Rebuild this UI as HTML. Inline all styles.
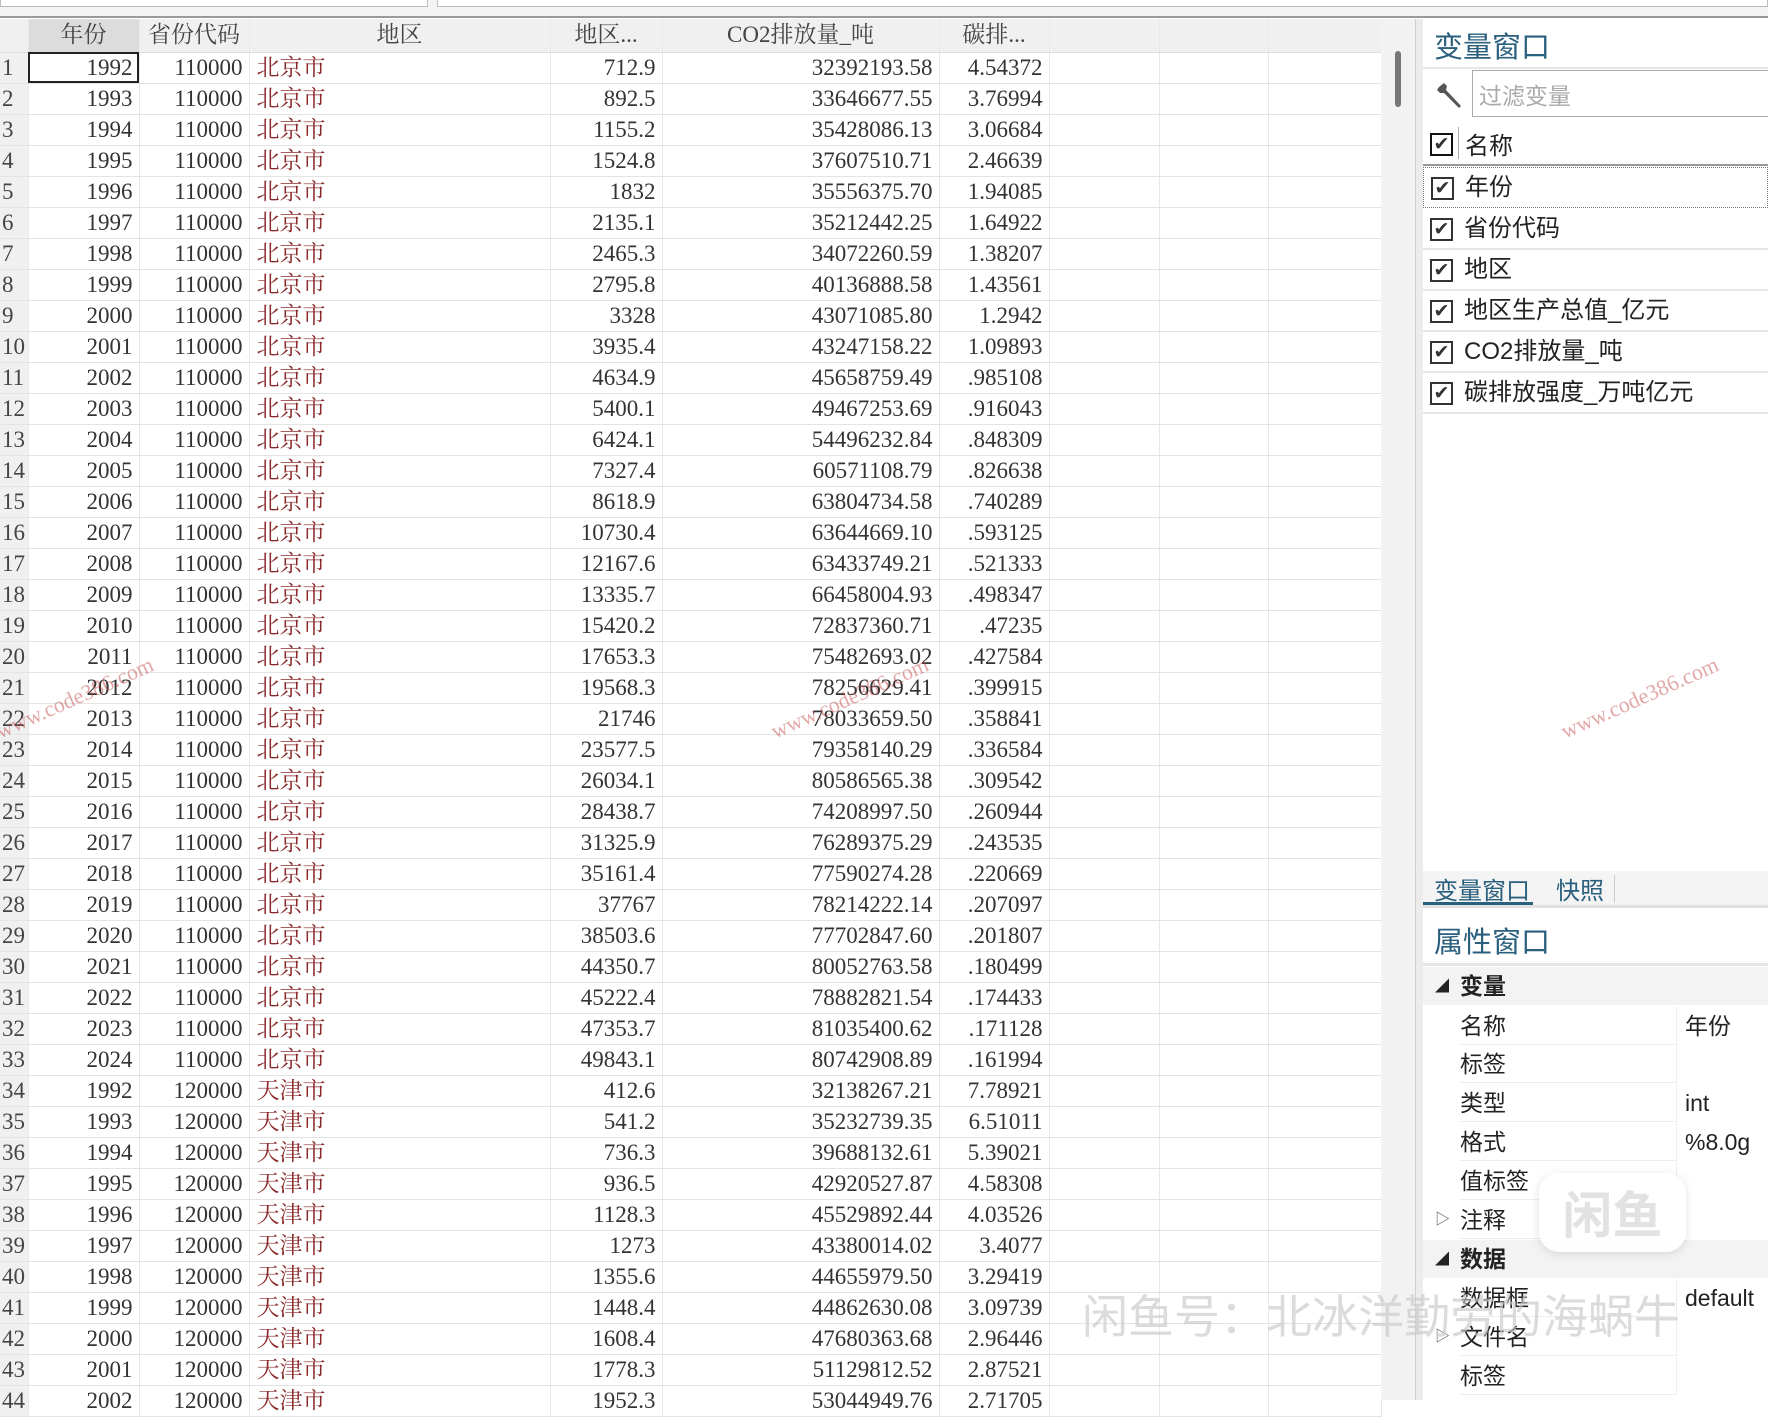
<!DOCTYPE html>
<html><head><meta charset="utf-8"><style>
*{box-sizing:border-box;margin:0;padding:0}
body{width:1768px;height:1400px;overflow:hidden;background:#fff;position:relative;font-family:"Liberation Serif","Noto Serif CJK SC",serif}
.top{position:absolute;left:0;top:0;width:1768px;height:18px;background:#f3f3f3;border-bottom:2px solid #9a9a9a}
.tb1{position:absolute;left:0;top:0;width:428px;height:7px;background:#fff;border:1px solid #bbb;border-top:none}
.tb2{position:absolute;left:437px;top:0;width:1331px;height:7px;background:#fff;border:1px solid #bbb;border-top:none}
table{position:absolute;left:0;top:19px;border-collapse:collapse;table-layout:fixed;font-size:23px;color:#333}
td,th{height:31px;border-bottom:1px solid #e4e4e4;border-right:1px solid #e8e8e8;white-space:nowrap;overflow:hidden;padding:0 6px;font-weight:normal;line-height:30px}
th{height:33px;background:#f0f0f0;color:#444;text-align:center;border-bottom:1px solid #ddd}
th.sel{background:#dcdcdc}
td.n{background:#f0f0f0;text-align:left;padding:0 0 0 2px;color:#444;overflow:hidden}
td.r{text-align:right}
td.c{color:#8a2a2a;padding-left:7px}
td.cur{outline:2px solid #222;outline-offset:-2px}
.gray{position:absolute;left:1381px;top:19px;width:34px;height:1381px;background:#f2f2f2}
.sb{position:absolute;left:1395px;top:51px;width:6px;height:56px;background:#777;border-radius:3px}
.sep{position:absolute;left:1415px;top:19px;width:8px;height:1381px;background:#ececec;border-left:1px solid #cfcfcf}
.panel{position:absolute;left:1423px;top:19px;width:345px;height:1381px;background:#fff;font-family:"Liberation Sans","Noto Sans CJK SC",sans-serif;color:#222}
.ttl{position:absolute;left:11px;font-size:29px;color:#2a5f7e}
.filter{position:absolute;left:49px;top:51px;width:300px;height:47px;border:1px solid #aaa;font-size:23px;color:#aaa;padding:6px 6px}
.vr{position:absolute;left:0;width:345px;height:41px;border-bottom:2px solid #e6e6e6;font-size:24px;line-height:40px}
.cb{position:absolute;left:7px;top:9px;width:23px;height:23px;border:2px solid #333;font-size:19px;line-height:19px;text-align:center;font-weight:bold;color:#333;font-family:"DejaVu Sans",sans-serif}
.vr span{position:absolute;left:41px}
.pr{position:absolute;left:0;width:345px;height:38px;font-size:23px;line-height:38px}
.pr .l{position:absolute;left:37px;width:217px;height:38px;border-bottom:1px solid #eee;border-right:1px solid #eee;padding-left:0}
.pr .v{position:absolute;left:262px}
.grp{background:#f3f3f3;font-weight:bold}
.wm{position:absolute;color:rgba(190,60,60,.45);font-size:22px;transform:rotate(-24deg);font-family:"Liberation Serif",serif;white-space:nowrap}
</style></head><body>
<div class="top"><div class="tb1"></div><div class="tb2"></div></div>
<table>
<colgroup><col style="width:28px"><col style="width:111px"><col style="width:110px"><col style="width:301px"><col style="width:112px"><col style="width:277px"><col style="width:110px"><col style="width:110px"><col style="width:109px"><col style="width:113px"></colgroup>
<tr><th></th><th class="sel">年份</th><th>省份代码</th><th>地区</th><th>地区...</th><th>CO2排放量_吨</th><th>碳排...</th><th></th><th></th><th></th></tr>
<tr><td class="n">1</td><td class="r cur">1992</td><td class="r">110000</td><td class="c">北京市</td><td class="r">712.9</td><td class="r">32392193.58</td><td class="r">4.54372</td><td></td><td></td><td></td></tr>
<tr><td class="n">2</td><td class="r">1993</td><td class="r">110000</td><td class="c">北京市</td><td class="r">892.5</td><td class="r">33646677.55</td><td class="r">3.76994</td><td></td><td></td><td></td></tr>
<tr><td class="n">3</td><td class="r">1994</td><td class="r">110000</td><td class="c">北京市</td><td class="r">1155.2</td><td class="r">35428086.13</td><td class="r">3.06684</td><td></td><td></td><td></td></tr>
<tr><td class="n">4</td><td class="r">1995</td><td class="r">110000</td><td class="c">北京市</td><td class="r">1524.8</td><td class="r">37607510.71</td><td class="r">2.46639</td><td></td><td></td><td></td></tr>
<tr><td class="n">5</td><td class="r">1996</td><td class="r">110000</td><td class="c">北京市</td><td class="r">1832</td><td class="r">35556375.70</td><td class="r">1.94085</td><td></td><td></td><td></td></tr>
<tr><td class="n">6</td><td class="r">1997</td><td class="r">110000</td><td class="c">北京市</td><td class="r">2135.1</td><td class="r">35212442.25</td><td class="r">1.64922</td><td></td><td></td><td></td></tr>
<tr><td class="n">7</td><td class="r">1998</td><td class="r">110000</td><td class="c">北京市</td><td class="r">2465.3</td><td class="r">34072260.59</td><td class="r">1.38207</td><td></td><td></td><td></td></tr>
<tr><td class="n">8</td><td class="r">1999</td><td class="r">110000</td><td class="c">北京市</td><td class="r">2795.8</td><td class="r">40136888.58</td><td class="r">1.43561</td><td></td><td></td><td></td></tr>
<tr><td class="n">9</td><td class="r">2000</td><td class="r">110000</td><td class="c">北京市</td><td class="r">3328</td><td class="r">43071085.80</td><td class="r">1.2942</td><td></td><td></td><td></td></tr>
<tr><td class="n">10</td><td class="r">2001</td><td class="r">110000</td><td class="c">北京市</td><td class="r">3935.4</td><td class="r">43247158.22</td><td class="r">1.09893</td><td></td><td></td><td></td></tr>
<tr><td class="n">11</td><td class="r">2002</td><td class="r">110000</td><td class="c">北京市</td><td class="r">4634.9</td><td class="r">45658759.49</td><td class="r">.985108</td><td></td><td></td><td></td></tr>
<tr><td class="n">12</td><td class="r">2003</td><td class="r">110000</td><td class="c">北京市</td><td class="r">5400.1</td><td class="r">49467253.69</td><td class="r">.916043</td><td></td><td></td><td></td></tr>
<tr><td class="n">13</td><td class="r">2004</td><td class="r">110000</td><td class="c">北京市</td><td class="r">6424.1</td><td class="r">54496232.84</td><td class="r">.848309</td><td></td><td></td><td></td></tr>
<tr><td class="n">14</td><td class="r">2005</td><td class="r">110000</td><td class="c">北京市</td><td class="r">7327.4</td><td class="r">60571108.79</td><td class="r">.826638</td><td></td><td></td><td></td></tr>
<tr><td class="n">15</td><td class="r">2006</td><td class="r">110000</td><td class="c">北京市</td><td class="r">8618.9</td><td class="r">63804734.58</td><td class="r">.740289</td><td></td><td></td><td></td></tr>
<tr><td class="n">16</td><td class="r">2007</td><td class="r">110000</td><td class="c">北京市</td><td class="r">10730.4</td><td class="r">63644669.10</td><td class="r">.593125</td><td></td><td></td><td></td></tr>
<tr><td class="n">17</td><td class="r">2008</td><td class="r">110000</td><td class="c">北京市</td><td class="r">12167.6</td><td class="r">63433749.21</td><td class="r">.521333</td><td></td><td></td><td></td></tr>
<tr><td class="n">18</td><td class="r">2009</td><td class="r">110000</td><td class="c">北京市</td><td class="r">13335.7</td><td class="r">66458004.93</td><td class="r">.498347</td><td></td><td></td><td></td></tr>
<tr><td class="n">19</td><td class="r">2010</td><td class="r">110000</td><td class="c">北京市</td><td class="r">15420.2</td><td class="r">72837360.71</td><td class="r">.47235</td><td></td><td></td><td></td></tr>
<tr><td class="n">20</td><td class="r">2011</td><td class="r">110000</td><td class="c">北京市</td><td class="r">17653.3</td><td class="r">75482693.02</td><td class="r">.427584</td><td></td><td></td><td></td></tr>
<tr><td class="n">21</td><td class="r">2012</td><td class="r">110000</td><td class="c">北京市</td><td class="r">19568.3</td><td class="r">78256629.41</td><td class="r">.399915</td><td></td><td></td><td></td></tr>
<tr><td class="n">22</td><td class="r">2013</td><td class="r">110000</td><td class="c">北京市</td><td class="r">21746</td><td class="r">78033659.50</td><td class="r">.358841</td><td></td><td></td><td></td></tr>
<tr><td class="n">23</td><td class="r">2014</td><td class="r">110000</td><td class="c">北京市</td><td class="r">23577.5</td><td class="r">79358140.29</td><td class="r">.336584</td><td></td><td></td><td></td></tr>
<tr><td class="n">24</td><td class="r">2015</td><td class="r">110000</td><td class="c">北京市</td><td class="r">26034.1</td><td class="r">80586565.38</td><td class="r">.309542</td><td></td><td></td><td></td></tr>
<tr><td class="n">25</td><td class="r">2016</td><td class="r">110000</td><td class="c">北京市</td><td class="r">28438.7</td><td class="r">74208997.50</td><td class="r">.260944</td><td></td><td></td><td></td></tr>
<tr><td class="n">26</td><td class="r">2017</td><td class="r">110000</td><td class="c">北京市</td><td class="r">31325.9</td><td class="r">76289375.29</td><td class="r">.243535</td><td></td><td></td><td></td></tr>
<tr><td class="n">27</td><td class="r">2018</td><td class="r">110000</td><td class="c">北京市</td><td class="r">35161.4</td><td class="r">77590274.28</td><td class="r">.220669</td><td></td><td></td><td></td></tr>
<tr><td class="n">28</td><td class="r">2019</td><td class="r">110000</td><td class="c">北京市</td><td class="r">37767</td><td class="r">78214222.14</td><td class="r">.207097</td><td></td><td></td><td></td></tr>
<tr><td class="n">29</td><td class="r">2020</td><td class="r">110000</td><td class="c">北京市</td><td class="r">38503.6</td><td class="r">77702847.60</td><td class="r">.201807</td><td></td><td></td><td></td></tr>
<tr><td class="n">30</td><td class="r">2021</td><td class="r">110000</td><td class="c">北京市</td><td class="r">44350.7</td><td class="r">80052763.58</td><td class="r">.180499</td><td></td><td></td><td></td></tr>
<tr><td class="n">31</td><td class="r">2022</td><td class="r">110000</td><td class="c">北京市</td><td class="r">45222.4</td><td class="r">78882821.54</td><td class="r">.174433</td><td></td><td></td><td></td></tr>
<tr><td class="n">32</td><td class="r">2023</td><td class="r">110000</td><td class="c">北京市</td><td class="r">47353.7</td><td class="r">81035400.62</td><td class="r">.171128</td><td></td><td></td><td></td></tr>
<tr><td class="n">33</td><td class="r">2024</td><td class="r">110000</td><td class="c">北京市</td><td class="r">49843.1</td><td class="r">80742908.89</td><td class="r">.161994</td><td></td><td></td><td></td></tr>
<tr><td class="n">34</td><td class="r">1992</td><td class="r">120000</td><td class="c">天津市</td><td class="r">412.6</td><td class="r">32138267.21</td><td class="r">7.78921</td><td></td><td></td><td></td></tr>
<tr><td class="n">35</td><td class="r">1993</td><td class="r">120000</td><td class="c">天津市</td><td class="r">541.2</td><td class="r">35232739.35</td><td class="r">6.51011</td><td></td><td></td><td></td></tr>
<tr><td class="n">36</td><td class="r">1994</td><td class="r">120000</td><td class="c">天津市</td><td class="r">736.3</td><td class="r">39688132.61</td><td class="r">5.39021</td><td></td><td></td><td></td></tr>
<tr><td class="n">37</td><td class="r">1995</td><td class="r">120000</td><td class="c">天津市</td><td class="r">936.5</td><td class="r">42920527.87</td><td class="r">4.58308</td><td></td><td></td><td></td></tr>
<tr><td class="n">38</td><td class="r">1996</td><td class="r">120000</td><td class="c">天津市</td><td class="r">1128.3</td><td class="r">45529892.44</td><td class="r">4.03526</td><td></td><td></td><td></td></tr>
<tr><td class="n">39</td><td class="r">1997</td><td class="r">120000</td><td class="c">天津市</td><td class="r">1273</td><td class="r">43380014.02</td><td class="r">3.4077</td><td></td><td></td><td></td></tr>
<tr><td class="n">40</td><td class="r">1998</td><td class="r">120000</td><td class="c">天津市</td><td class="r">1355.6</td><td class="r">44655979.50</td><td class="r">3.29419</td><td></td><td></td><td></td></tr>
<tr><td class="n">41</td><td class="r">1999</td><td class="r">120000</td><td class="c">天津市</td><td class="r">1448.4</td><td class="r">44862630.08</td><td class="r">3.09739</td><td></td><td></td><td></td></tr>
<tr><td class="n">42</td><td class="r">2000</td><td class="r">120000</td><td class="c">天津市</td><td class="r">1608.4</td><td class="r">47680363.68</td><td class="r">2.96446</td><td></td><td></td><td></td></tr>
<tr><td class="n">43</td><td class="r">2001</td><td class="r">120000</td><td class="c">天津市</td><td class="r">1778.3</td><td class="r">51129812.52</td><td class="r">2.87521</td><td></td><td></td><td></td></tr>
<tr><td class="n">44</td><td class="r">2002</td><td class="r">120000</td><td class="c">天津市</td><td class="r">1952.3</td><td class="r">53044949.76</td><td class="r">2.71705</td><td></td><td></td><td></td></tr>
</table>
<div class="gray"></div><div class="sb"></div>
<div class="sep"></div>
<div class="panel">
 <div class="ttl" style="top:5px">变量窗口</div>
 <div style="position:absolute;left:0;top:48px;width:345px;height:2px;background:#e6e6e6"></div>
 <svg style="position:absolute;left:12px;top:62px" width="30" height="30" viewBox="0 0 30 30"><path d="M4 6 L9 2 L12 5 L11 9 L26 25 L24 27 L9 12 L5 12 L2 9 Z" fill="#555"/></svg>
 <div class="filter">过滤变量</div>
 <div style="position:absolute;left:0;top:104px;width:345px;height:43px;border-bottom:2px solid #999">
  <div class="cb" style="top:10px;border-color:#111">✔</div><span style="position:absolute;left:42px;top:3px;font-size:24px">名称</span>
  <div style="position:absolute;left:35px;top:4px;width:1px;height:32px;background:#aaa"></div></div>
 <div class="vr" style="top:148px;border:1px dotted #777"><div class="cb">✔</div><span>年份</span></div>
 <div class="vr" style="top:190px"><div class="cb">✔</div><span>省份代码</span></div>
 <div class="vr" style="top:231px"><div class="cb">✔</div><span>地区</span></div>
 <div class="vr" style="top:272px"><div class="cb">✔</div><span>地区生产总值_亿元</span></div>
 <div class="vr" style="top:313px"><div class="cb">✔</div><span>CO2排放量_吨</span></div>
 <div class="vr" style="top:354px"><div class="cb">✔</div><span>碳排放强度_万吨亿元</span></div>
 <div style="position:absolute;left:0;top:852px;width:345px;height:37px;background:#f4f4f4;border-bottom:3px solid #e0e0e0"></div>
 <div style="position:absolute;left:11px;top:852px;font-size:24px;color:#2a5f7e">变量窗口</div>
 <div style="position:absolute;left:0;top:883px;width:110px;height:3px;background:#2a5f7e"></div>
 <div style="position:absolute;left:133px;top:852px;font-size:24px;color:#2a5f7e">快照</div>
 <div style="position:absolute;left:191px;top:856px;width:1px;height:28px;background:#ccc"></div>
 <div class="ttl" style="top:900px">属性窗口</div>
 <div style="position:absolute;left:0;top:944px;width:345px;height:3px;background:#e6e6e6"></div>
 <div class="pr grp" style="top:948px"><span style="position:absolute;left:12px;font-size:14px">◢</span><span style="position:absolute;left:37px">变量</span></div>
 <div class="pr" style="top:988px"><div class="l">名称</div><span class="v">年份</span></div>
 <div class="pr" style="top:1026px"><div class="l">标签</div></div>
 <div class="pr" style="top:1065px"><div class="l">类型</div><span class="v">int</span></div>
 <div class="pr" style="top:1104px"><div class="l">格式</div><span class="v">%8.0g</span></div>
 <div class="pr" style="top:1143px"><div class="l">值标签</div></div>
 <div class="pr" style="top:1182px"><span style="position:absolute;left:12px;font-size:15px;color:#555">▷</span><div class="l">注释</div></div>
 <div class="pr grp" style="top:1221px"><span style="position:absolute;left:12px;font-size:14px">◢</span><span style="position:absolute;left:37px">数据</span></div>
 <div class="pr" style="top:1260px"><div class="l">数据框</div><span class="v">default</span></div>
 <div class="pr" style="top:1299px"><span style="position:absolute;left:12px;font-size:15px;color:#555">▷</span><div class="l">文件名</div></div>
 <div class="pr" style="top:1338px"><div class="l">标签</div></div>
</div>
<div style="position:absolute;left:1539px;top:1173px;width:147px;height:79px;background:rgba(255,255,255,.92);border-radius:20px;box-shadow:0 2px 10px rgba(0,0,0,.12);font-family:'Noto Sans CJK SC',sans-serif;font-size:50px;font-weight:bold;color:#e2e2e2;text-align:center;line-height:79px">闲鱼</div>
<div style="position:absolute;left:1082px;top:1281px;font-size:46px;color:rgba(200,200,200,.65);font-family:'Noto Sans CJK SC',sans-serif;white-space:nowrap">闲鱼号：北冰洋勤劳的海蜗牛</div>
<div class="wm" style="left:-10px;top:685px">www.code386.com</div>
<div class="wm" style="left:765px;top:685px">www.code386.com</div>
<div class="wm" style="left:1555px;top:685px">www.code386.com</div>
</body></html>
